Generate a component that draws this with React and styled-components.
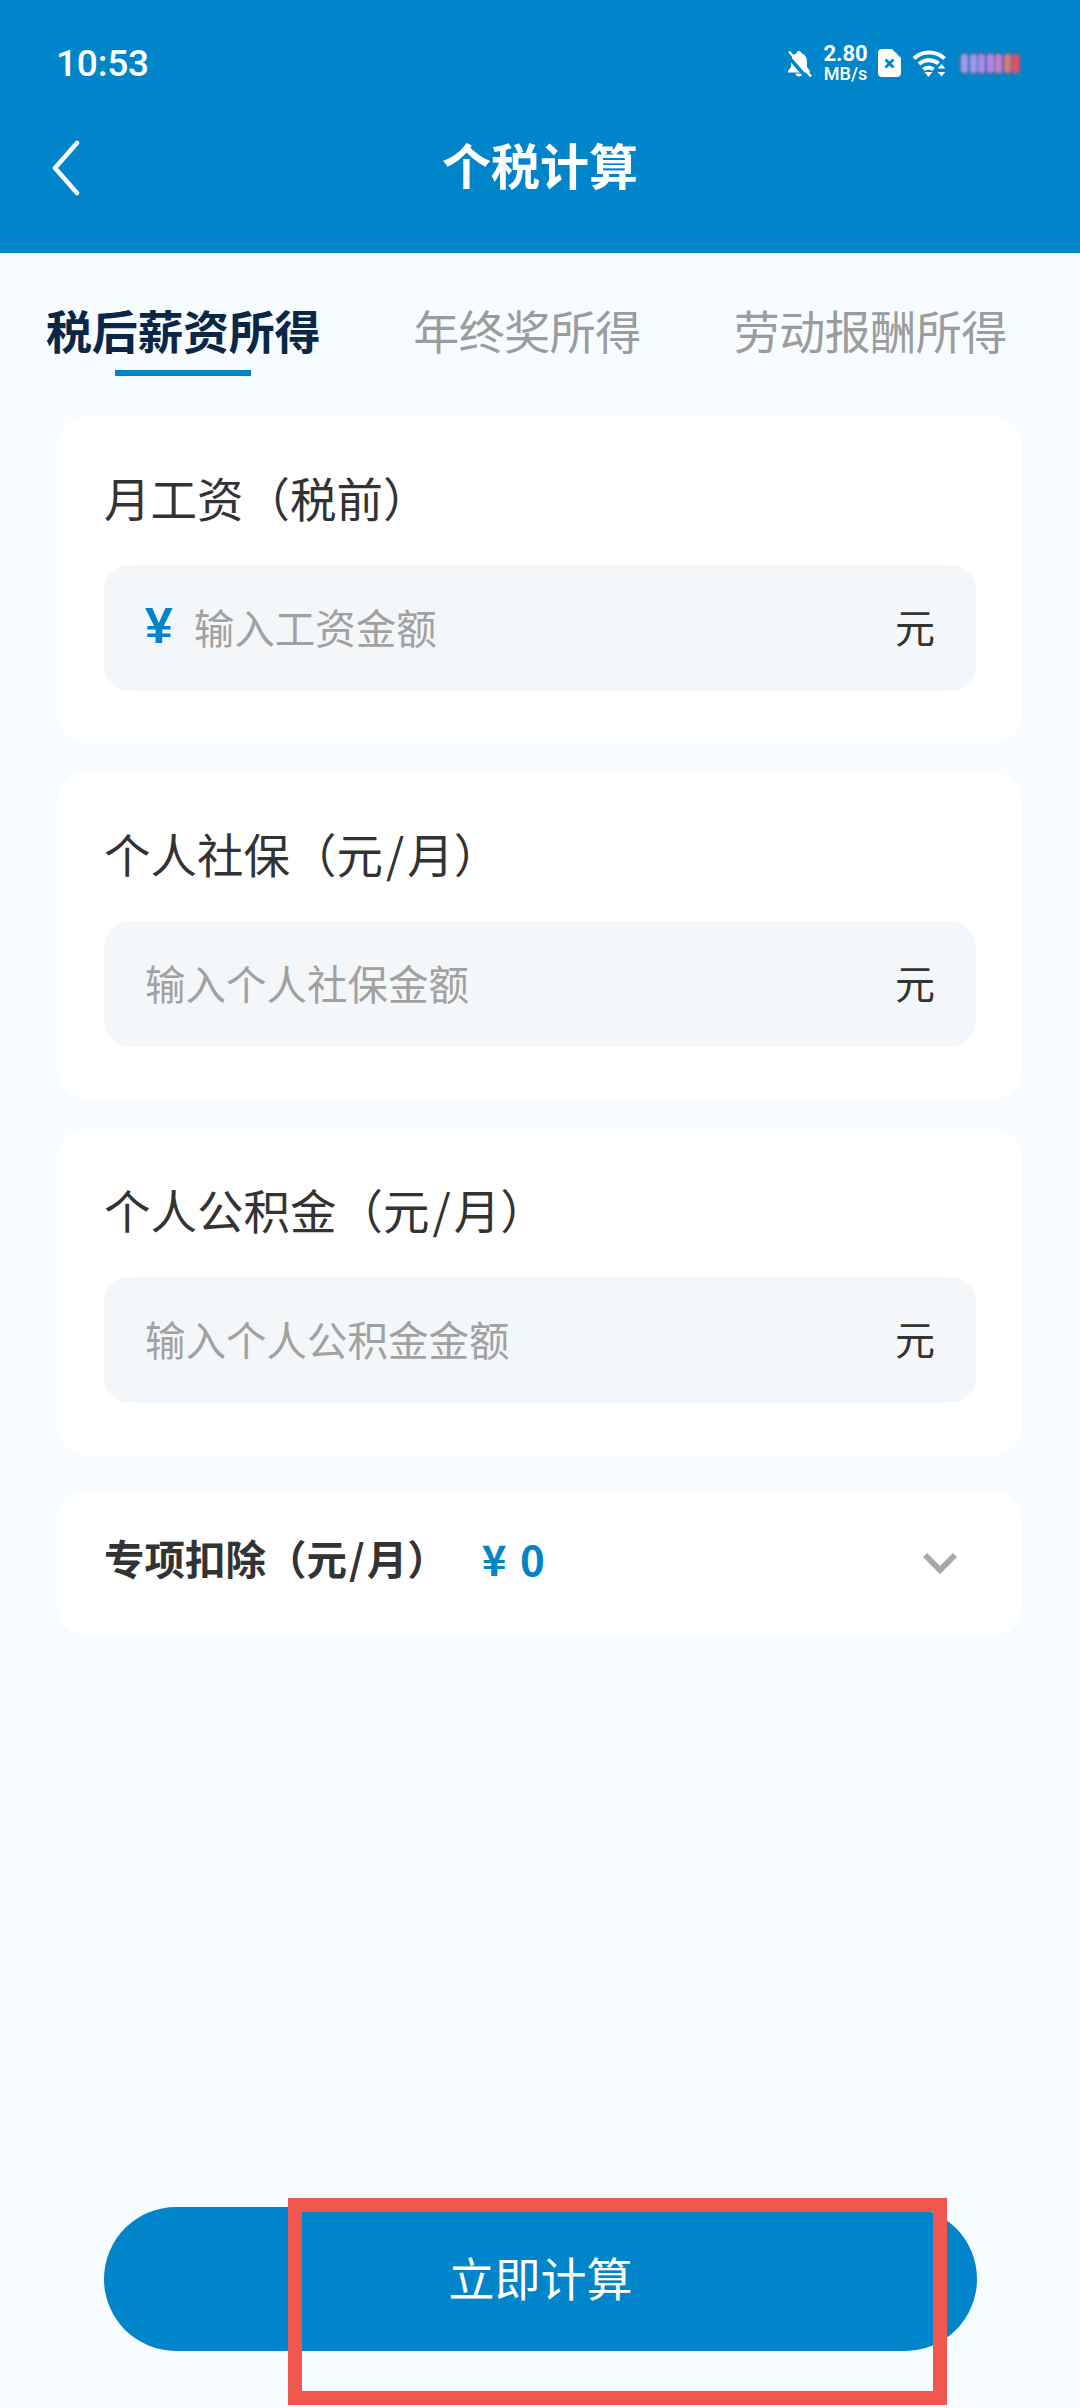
import React from "react";
import styled, { createGlobalStyle } from "styled-components";

const GlobalStyle = createGlobalStyle`
  html, body { margin: 0; padding: 0; background: #f6fcff; }
  * { box-sizing: border-box; }
  body { font-family: "Noto Sans CJK SC", "Noto Sans", sans-serif; }
`;

const Page = styled.div`
  width: 1080px;
  height: 2408px;
  overflow: hidden;
  display: flex;
  flex-direction: column;
  background: #f6fcff;
`;

const Header = styled.header`
  height: 253px;
  background: #0084ca;
  color: #fff;
  flex-shrink: 0;
`;

const StatusBar = styled.div`
  height: 126px;
  padding: 0 58px 0 56px;
  display: flex;
  align-items: center;
  justify-content: space-between;
`;

const Clock = styled.span`
  font-family: Roboto, sans-serif;
  font-weight: 500;
  font-size: 37px;
  letter-spacing: -0.2px;
`;

const StatusIcons = styled.div`
  display: flex;
  align-items: center;
`;

const Speed = styled.div`
  margin: 0 10px 0 11px;
  width: 45px;
  font-family: Roboto, sans-serif;
  text-align: center;
  display: flex;
  flex-direction: column;
  align-items: center;
`;

const SpeedValue = styled.span`
  font-size: 22px;
  font-weight: 700;
  line-height: 22px;
`;

const SpeedUnit = styled.span`
  font-size: 18px;
  font-weight: 500;
  line-height: 18px;
`;

const Battery = styled.div`
  margin-left: 11px;
  width: 64px;
  height: 23px;
  padding: 2px 3px;
  display: flex;
  gap: 1.5px;
  border-radius: 7px;
  background: rgba(105, 105, 165, 0.5);
  filter: blur(0.9px);
`;

const BatteryCell = styled.span`
  flex: 1;
  border-radius: 4px;
  background: ${(p) => p.$color};
`;

const NavBar = styled.nav`
  height: 82px;
  position: relative;
  display: flex;
  align-items: center;
  justify-content: center;
`;

const BackButton = styled.button`
  position: absolute;
  left: 50px;
  top: 14px;
  padding: 0;
  border: 0;
  background: none;
  display: flex;
`;

const Title = styled.h1`
  margin: 0 0 6px;
  font-size: 49px;
  font-weight: 700;
  line-height: 74px;
`;

const Tabs = styled.div`
  height: 163px;
  flex-shrink: 0;
  padding-left: 46px;
  display: flex;
  gap: 93px;
`;

const Tab = styled.div`
  position: relative;
  height: 123px;
  padding-top: 28px;
  display: flex;
  align-items: center;
  font-size: 46px;
  letter-spacing: ${(p) => (p.$active ? "-0.3px" : "-0.5px")};
  font-weight: ${(p) => (p.$active ? 700 : 400)};
  color: ${(p) => (p.$active ? "#0a2747" : "#9c9c9c")};
  white-space: nowrap;
`;

const TabMark = styled.span`
  position: absolute;
  left: 69px;
  bottom: 0;
  width: 136px;
  height: 6px;
  background: #0084ca;
`;

const Form = styled.div`
  margin: 0 58px 0 57px;
  display: flex;
  flex-direction: column;
`;

const Card = styled.section`
  height: 327px;
  margin-bottom: 29px;
  padding: 52px 46px 0 47px;
  background: #fff;
  border-radius: 30px;
`;

const FieldLabel = styled.div`
  height: 58px;
  line-height: 58px;
  font-size: 46.5px;
  color: #333;
  white-space: nowrap;
`;

const Slash = styled.span`
  margin: 0 ${(p) => p.$gap}px;
`;

const InputBox = styled.div`
  height: 126px;
  margin-top: 39px;
  padding: 0 41px 4px 41px;
  display: flex;
  align-items: center;
  background: #f4f7f9;
  border-radius: 26px;
`;

const Currency = styled.span`
  margin-right: 21px;
  font-family: "Liberation Sans", sans-serif;
  font-size: 50px;
  font-weight: 700;
  color: #0084ca;
`;

const Placeholder = styled.span`
  flex: 1;
  font-size: 40.5px;
  color: #a1a1a1;
`;

const Unit = styled.span`
  font-size: 40px;
  color: #333;
`;

const DeductionCard = styled.section`
  height: 145px;
  margin-top: 6px;
  padding: 0 64px 10px 47px;
  display: flex;
  align-items: center;
  background: #fff;
  border-radius: 30px;
`;

const DeductionLabel = styled.span`
  font-size: 40.5px;
  font-weight: 700;
  color: #333;
`;

const DeductionValue = styled.span`
  margin-left: 34px;
  flex: 1;
  font-size: 42px;
  font-weight: 700;
  word-spacing: 4px;
  color: #0084ca;
`;

const Chevron = styled.svg`
  margin-top: 10px;
`;

const Footer = styled.div`
  position: relative;
  margin-top: auto;
  padding: 0 103px 57px 104px;
`;

const SubmitButton = styled.button`
  width: 100%;
  height: 144px;
  padding: 0 0 6px;
  border: 0;
  border-radius: 72px;
  background: #0084ca;
  color: #fff;
  font-family: inherit;
  font-size: 46px;
`;

const Highlight = styled.div`
  position: absolute;
  left: 288px;
  top: -9px;
  width: 659px;
  height: 207px;
  border: 14px solid #f0574e;
  pointer-events: none;
`;

const MonthUnit = () => (
  <>
    （元<Slash $gap={3}>/</Slash>月）
  </>
);

const fields = [
  { id: "salary", label: "月工资（税前）", hint: "输入工资金额", currency: true },
  { id: "social", label: <>个人社保<MonthUnit /></>, hint: "输入个人社保金额" },
  { id: "fund", label: <>个人公积金<MonthUnit /></>, hint: "输入个人公积金金额" },
];

const batteryCells = ["#9a9ce8", "#a096ea", "#ad88e2", "#bb82da", "#c97cc4", "#d9757f", "#e2505c"];

const App = () => (
  <Page>
    <GlobalStyle />
    <Header>
      <StatusBar>
        <Clock>10:53</Clock>
        <StatusIcons>
          <svg width="26" height="27" viewBox="0 0 26 27">
            <path d="M13 1c-1.500 0-2.300 1-2.400 2.200C7 4.300 5 7.200 5 11v6l-3 4v1.500h22V21l-3-4v-6c0-3.800-2-6.700-5.600-7.800C15.300 2 14.500 1 13 1z" fill="#fff" />
            <path d="M9.500 23.500h7c-.4 1.800-1.800 3-3.500 3s-3.100-1.200-3.500-3z" fill="#fff" />
            <path d="M0 4l20 23" stroke="#0084ca" strokeWidth="3.500" />
            <path d="M3 1.500l22 25" stroke="#fff" strokeWidth="2.400" />
          </svg>
          <Speed>
            <SpeedValue>2.80</SpeedValue>
            <SpeedUnit>MB/s</SpeedUnit>
          </Speed>
          <svg width="23" height="28" viewBox="0 0 23 28">
            <path d="M4 0h10l9 9v15a4 4 0 0 1-4 4H4a4 4 0 0 1-4-4V4a4 4 0 0 1 4-4z" fill="#fff" />
            <path d="M7.500 10.500l8 8m0-8l-8 8" stroke="#0084ca" strokeWidth="2.800" />
          </svg>
          <svg width="35" height="28" viewBox="0 0 35 28" style={{ marginLeft: 11 }}>
            <g fill="none" stroke="#fff" strokeWidth="4">
              <path d="M2 9.500C10 1.500 24 1.500 32.500 9.500" />
              <path d="M7 15c5.500-5 14-5 19.500-.5" />
              <path d="M11.500 20.500c3-2.500 7-2.500 10 0" />
            </g>
            <path d="M12.500 23h8l-4 5z" fill="#fff" />
            <path d="M29.500 15l3.800 4.500h-7.600zM29.500 27.500L25.700 23h7.600z" fill="#fff" />
          </svg>
          <Battery>
            {batteryCells.map((color) => (
              <BatteryCell key={color} $color={color} />
            ))}
          </Battery>
        </StatusIcons>
      </StatusBar>
      <NavBar>
        <BackButton aria-label="返回">
          <svg width="32" height="56" viewBox="0 0 32 56">
            <path d="M27 3L5 28l22 25" fill="none" stroke="#fff" strokeWidth="4.500" strokeLinecap="round" strokeLinejoin="round" />
          </svg>
        </BackButton>
        <Title>个税计算</Title>
      </NavBar>
    </Header>

    <Tabs>
      <Tab $active>
        税后薪资所得
        <TabMark />
      </Tab>
      <Tab>年终奖所得</Tab>
      <Tab>劳动报酬所得</Tab>
    </Tabs>

    <Form>
      {fields.map((field) => (
        <Card key={field.id}>
          <FieldLabel>{field.label}</FieldLabel>
          <InputBox>
            {field.currency && <Currency>¥</Currency>}
            <Placeholder>{field.hint}</Placeholder>
            <Unit>元</Unit>
          </InputBox>
        </Card>
      ))}
      <DeductionCard>
        <DeductionLabel>专项扣除（元<Slash $gap={2}>/</Slash>月）</DeductionLabel>
        <DeductionValue>¥ 0</DeductionValue>
        <Chevron width="36" height="22" viewBox="0 0 36 22">
          <path d="M3 3l15 15L33 3" fill="none" stroke="#a8a8a8" strokeWidth="6" />
        </Chevron>
      </DeductionCard>
    </Form>

    <Footer>
      <SubmitButton>立即计算</SubmitButton>
      <Highlight />
    </Footer>
  </Page>
);

export default App;
